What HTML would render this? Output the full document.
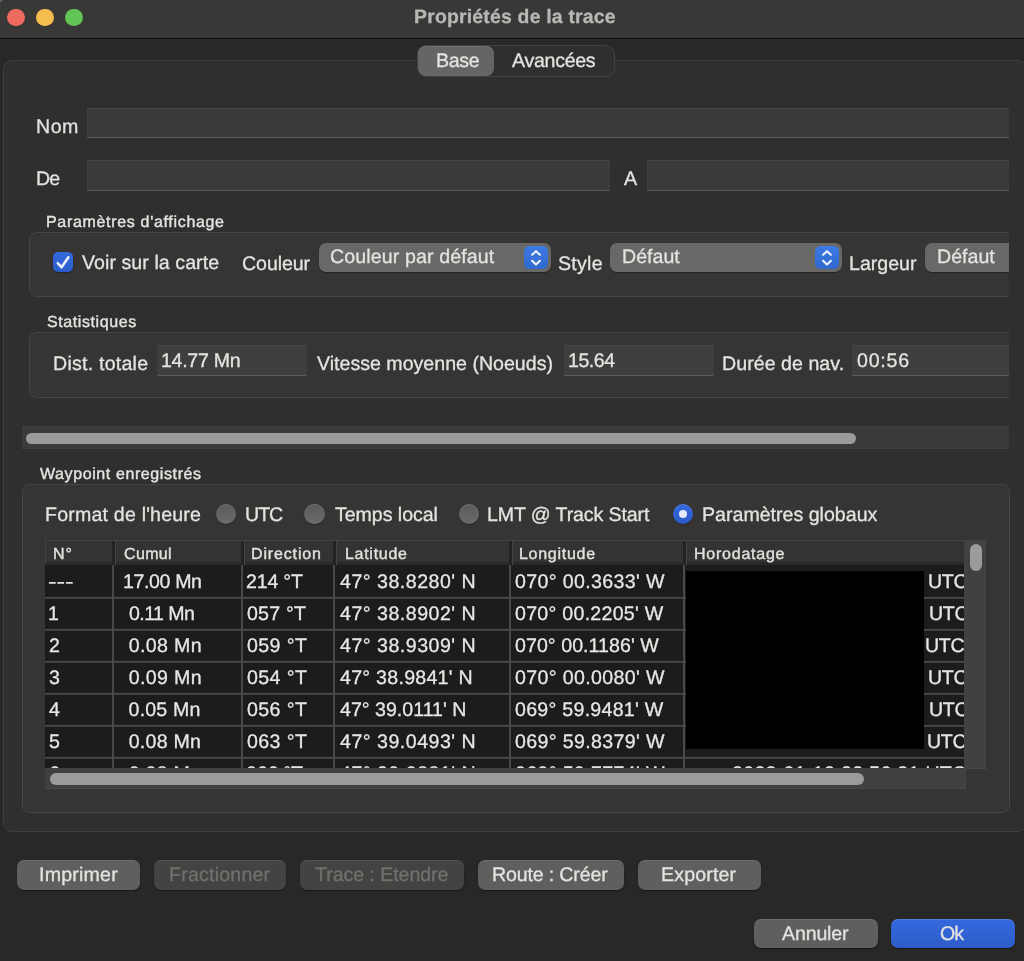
<!DOCTYPE html>
<html lang="fr">
<head>
<meta charset="utf-8">
<title>Propriétés de la trace</title>
<style>
html,body{margin:0;padding:0;}
body{width:1024px;height:961px;overflow:hidden;background:#282826;position:relative;
  font-family:"Liberation Sans","DejaVu Sans",sans-serif;font-size:19.6px;color:#e3e3e1;
  -webkit-font-smoothing:antialiased;}
*{box-sizing:border-box;}
.abs{position:absolute;}
.t{position:absolute;white-space:pre;line-height:22px;height:22px;will-change:transform;text-rendering:geometricPrecision;-webkit-text-stroke:0.3px currentColor;}
.t.s{-webkit-text-stroke:0.4px currentColor;}
.s{font-size:16px;}
/* title bar */
#titlebar{left:0;top:0;width:1024px;height:38px;background:#383836;border-bottom:0;}
#tline{left:0;top:37.5px;width:1024px;height:1.5px;background:#0b0b0a;}
.tl{position:absolute;width:17.6px;height:17.6px;border-radius:50%;top:8.8px;}
#title{font-weight:bold;font-size:19.4px;color:#b8b7b5;}
/* panel */
#panel{left:3px;top:60px;width:1024px;height:771.5px;background:#2f2f2d;border:1px solid #403f3d;border-radius:9px;}
#tabs{left:417px;top:45px;width:198px;height:32px;background:#2f2f2d;border:1px solid #41413f;border-radius:9px;}
#tabsel{left:417.6px;top:46.3px;width:76.6px;height:29.4px;background:#656563;border-radius:7.5px;box-shadow:inset 0 1px 0 rgba(255,255,255,.06);}
.field{position:absolute;background:#3b3a38;border-top:1px solid #464644;border-bottom:1px solid #5d5d5b;border-left:1px solid #403f3d;border-right:1px solid #403f3d;}
.grp{position:absolute;background:#363533;border:1px solid #474644;border-radius:7.5px;}
.pop{position:absolute;height:29px;top:243px;background:#686866;border-radius:7px;box-shadow:0 1px 1px rgba(0,0,0,.35);}
.step{position:absolute;width:24px;height:23px;top:246px;border-radius:5.5px;background:linear-gradient(#3b7be3,#3068ce);}
.btn{position:absolute;height:29.5px;border-radius:7px;background:#5f5f5d;box-shadow:0 1px 1.5px rgba(0,0,0,.45), inset 0 1px 0 rgba(255,255,255,.09);}
.btn.dis{background:#434341;}
.d{color:#70706e;}
.radio{position:absolute;width:20.6px;height:20.6px;border-radius:50%;top:503.6px;background:linear-gradient(#5b5b59,#6b6b69);box-shadow:0 0.5px 1.5px rgba(0,0,0,.45), inset 0 1px 0 rgba(255,255,255,.12);}
#clip{left:0;top:0;width:1009px;height:961px;overflow:hidden;}
#thead{background:#333331;border-left:1px solid #434341;border-top:1px solid #434341;border-bottom:3px solid #282826;height:25px !important;}
.hs{top:0;width:3px;height:24px;background:#232321;box-shadow:1px 0 0 #444442;}
.hl{left:0;width:919px;height:2px;background:linear-gradient(#4d4d4b 0,#4d4d4b 1px,#3a3a38 1px,#3a3a38 2px);}
.vl{top:0;width:2px;height:204px;background:#484846;}
.c{color:#e6e6e4;}
.h{color:#e0e0de;}
</style>
</head>
<body>
<div class="abs" id="titlebar"></div>
<div class="abs" id="tline"></div>
<svg class="abs" style="left:0;top:0;" width="6" height="6" viewBox="0 0 6 6"><path d="M-0.5 3.6 A4.6 4.6 0 0 1 3.6 -0.5" fill="none" stroke="#6e6e6c" stroke-width="1.3" opacity="0.85"/></svg>
<div class="tl" style="left:7.3px;background:#ee6a5f;"></div>
<div class="tl" style="left:36.3px;background:#f5be4f;"></div>
<div class="tl" style="left:65.4px;background:#61c455;"></div>
<div class="t" id="title" style="left:413.5px;top:6px;letter-spacing:0.21px;">Propriétés de la trace</div>

<div class="abs" id="panel"></div>
<div class="abs" id="tabs"></div>
<div class="abs" id="tabsel"></div>
<div class="t" style="left:435.6px;top:50px;letter-spacing:-0.33px;">Base</div>
<div class="t" style="left:512px;top:50px;letter-spacing:-0.29px;">Avancées</div>

<div class="abs" id="clip">
<!-- name rows -->
<div class="t" style="left:36px;top:116px;letter-spacing:0.50px;">Nom</div>
<div class="field" style="left:87px;top:108px;width:930px;height:30px;"></div>
<div class="t" style="left:36px;top:168px;letter-spacing:-1.00px;">De</div>
<div class="field" style="left:87px;top:160px;width:523px;height:31px;"></div>
<div class="t" style="left:624px;top:168px;">A</div>
<div class="field" style="left:647px;top:160px;width:370px;height:31px;"></div>

<!-- display params -->
<div class="t s" style="left:46px;top:212px;letter-spacing:0.68px;">Paramètres d'affichage</div>
<div class="grp" style="left:29px;top:232px;width:1000px;height:65px;"></div>
<div class="abs" id="chk" style="left:52.5px;top:252px;width:20.5px;height:20px;border-radius:5px;background:linear-gradient(#3568da,#2b5ccc);box-shadow:0 1px 1.5px rgba(0,0,0,.35);"></div>
<svg class="abs" style="left:52.5px;top:252px;" width="20" height="20" viewBox="0 0 20 20"><path d="M4.7 11.2 L8.6 15.3 L15.4 5.3" fill="none" stroke="#edf1fc" stroke-width="2.5" stroke-linecap="round" stroke-linejoin="round"/></svg>
<div class="t" style="left:82px;top:252px;letter-spacing:0.06px;">Voir sur la carte</div>
<div class="t" style="left:241.5px;top:253px;letter-spacing:-0.08px;">Couleur</div>
<div class="pop" style="left:319px;width:231.5px;"></div>
<div class="t" style="left:330px;top:246px;letter-spacing:0.11px;">Couleur par défaut</div>
<div class="step" style="left:524px;"><svg width="24" height="23" viewBox="0 0 24 23" style="display:block"><path d="M8.1 8.8 L12 5.2 L15.9 8.8 M8.1 14.8 L12 18.5 L15.9 14.8" fill="none" stroke="#eef3fd" stroke-width="2.1" stroke-linecap="round" stroke-linejoin="round"/></svg></div>
<div class="t" style="left:557.5px;top:253px;letter-spacing:0.25px;">Style</div>
<div class="pop" style="left:610px;width:232px;"></div>
<div class="t" style="left:622px;top:246px;">Défaut</div>
<div class="step" style="left:815px;"><svg width="24" height="23" viewBox="0 0 24 23" style="display:block"><path d="M8.1 8.8 L12 5.2 L15.9 8.8 M8.1 14.8 L12 18.5 L15.9 14.8" fill="none" stroke="#eef3fd" stroke-width="2.1" stroke-linecap="round" stroke-linejoin="round"/></svg></div>
<div class="t" style="left:849px;top:253px;">Largeur</div>
<div class="pop" style="left:925px;width:120px;"></div>
<div class="t" style="left:936.8px;top:246px;">Défaut</div>

<!-- stats -->
<div class="t s" style="left:47px;top:312px;letter-spacing:0.59px;">Statistiques</div>
<div class="grp" style="left:29px;top:332px;width:1000px;height:65.5px;"></div>
<div class="t" style="left:52.5px;top:353px;letter-spacing:0.23px;">Dist. totale</div>
<div class="field" style="left:157px;top:345px;width:150px;height:31px;background:#403f3d;"></div>
<div class="t" style="left:161px;top:350px;letter-spacing:-0.29px;">14.77 Mn</div>
<div class="t" style="left:317px;top:353px;">Vitesse moyenne (Noeuds)</div>
<div class="field" style="left:564px;top:345px;width:150px;height:31px;background:#403f3d;"></div>
<div class="t" style="left:568px;top:350px;letter-spacing:-0.50px;">15.64</div>
<div class="t" style="left:722px;top:353px;letter-spacing:0.04px;">Durée de nav.</div>
<div class="field" style="left:852px;top:345px;width:170px;height:31px;background:#403f3d;"></div>
<div class="t" style="left:857px;top:350px;letter-spacing:0.75px;">00:56</div>

<!-- hscroll -->
<div class="abs" style="left:22px;top:426px;width:990px;height:23px;background:#3a3a38;border-top:1px solid #434341;border-bottom:1px solid #40403e;"></div>
<div class="abs" style="left:26px;top:432.5px;width:830px;height:11.5px;border-radius:6px;background:#9b9b99;"></div>
</div>

<!-- waypoints -->
<div class="t s" style="left:40px;top:464px;letter-spacing:0.60px;">Waypoint enregistrés</div>
<div class="grp" id="wp" style="left:22px;top:484px;width:987.5px;height:328.5px;"></div>
<div class="t" style="left:45px;top:504px;letter-spacing:0.19px;">Format de l'heure</div>
<div class="radio" style="left:215.6px;"></div>
<div class="t" style="left:244.5px;top:504px;letter-spacing:-1.00px;">UTC</div>
<div class="radio" style="left:304.2px;"></div>
<div class="t" style="left:335px;top:504px;letter-spacing:-0.05px;">Temps local</div>
<div class="radio" style="left:458.7px;"></div>
<div class="t" style="left:487.4px;top:504px;letter-spacing:-0.12px;">LMT @ Track Start</div>
<div class="radio" style="left:672.8px;background:linear-gradient(#3569dc,#2b5bca);"></div>
<div class="abs" style="left:678.7px;top:509.5px;width:8.8px;height:8.8px;border-radius:50%;background:#e6ebfc;"></div>
<div class="t" style="left:702px;top:504px;">Paramètres globaux</div>

<div class="abs" id="table" style="left:45px;top:540px;width:941px;height:249px;background:#363533;overflow:hidden;">
<div class="abs" style="left:0;top:24px;width:919px;height:204px;background:#1c1c1b;overflow:hidden;" id="tbody">
<div class="t c" style="left:2.5px;top:7px;transform:scaleX(1.3);transform-origin:0 0;">---</div>
<div class="t c" style="left:78px;top:7px;letter-spacing:-0.39px;">17.00 Mn</div>
<div class="t c" style="left:201px;top:7px;letter-spacing:-0.20px;">214 °T</div>
<div class="t c" style="left:295px;top:7px;letter-spacing:0.49px;">47° 38.8280' N</div>
<div class="t c" style="left:470px;top:7px;letter-spacing:0.35px;">070° 00.3633' W</div>
<div class="t c" style="left:883px;top:7px;letter-spacing:-0.3px;">UTC</div>
<div class="abs hl" style="top:33px;"></div>
<div class="t c" style="left:3px;top:39px;">1</div>
<div class="t c" style="left:79.2px;top:39px;letter-spacing:-0.54px;"> 0.11 Mn</div>
<div class="t c" style="left:202.2px;top:39px;letter-spacing:0.20px;">057 °T</div>
<div class="t c" style="left:295px;top:39px;letter-spacing:0.49px;">47° 38.8902' N</div>
<div class="t c" style="left:470px;top:39px;letter-spacing:0.27px;">070° 00.2205' W</div>
<div class="t c" style="left:884px;top:39px;letter-spacing:-0.3px;">UTC</div>
<div class="abs hl" style="top:65px;"></div>
<div class="t c" style="left:4px;top:71px;">2</div>
<div class="t c" style="left:78.2px;top:71px;letter-spacing:0.33px;"> 0.08 Mn</div>
<div class="t c" style="left:202.2px;top:71px;letter-spacing:0.40px;">059 °T</div>
<div class="t c" style="left:295px;top:71px;letter-spacing:0.49px;">47° 38.9309' N</div>
<div class="t c" style="left:470px;top:71px;letter-spacing:0.05px;">070° 00.1186' W</div>
<div class="t c" style="left:879.5px;top:71px;letter-spacing:-0.3px;">UTC</div>
<div class="abs hl" style="top:97px;"></div>
<div class="t c" style="left:4px;top:103px;">3</div>
<div class="t c" style="left:78.2px;top:103px;letter-spacing:0.33px;"> 0.09 Mn</div>
<div class="t c" style="left:202.2px;top:103px;letter-spacing:0.40px;">054 °T</div>
<div class="t c" style="left:295px;top:103px;letter-spacing:0.26px;">47° 38.9841' N</div>
<div class="t c" style="left:470px;top:103px;letter-spacing:0.35px;">070° 00.0080' W</div>
<div class="t c" style="left:883px;top:103px;letter-spacing:-0.3px;">UTC</div>
<div class="abs hl" style="top:129px;"></div>
<div class="t c" style="left:4px;top:135px;">4</div>
<div class="t c" style="left:78.2px;top:135px;letter-spacing:0.17px;"> 0.05 Mn</div>
<div class="t c" style="left:202.2px;top:135px;letter-spacing:0.40px;">056 °T</div>
<div class="t c" style="left:295px;top:135px;">47° 39.0111' N</div>
<div class="t c" style="left:470px;top:135px;letter-spacing:0.27px;">069° 59.9481' W</div>
<div class="t c" style="left:883.5px;top:135px;letter-spacing:-0.3px;">UTC</div>
<div class="abs hl" style="top:161px;"></div>
<div class="t c" style="left:4px;top:167px;">5</div>
<div class="t c" style="left:77.6px;top:167px;letter-spacing:0.25px;"> 0.08 Mn</div>
<div class="t c" style="left:202.2px;top:167px;letter-spacing:0.40px;">063 °T</div>
<div class="t c" style="left:295px;top:167px;letter-spacing:0.49px;">47° 39.0493' N</div>
<div class="t c" style="left:470px;top:167px;letter-spacing:0.35px;">069° 59.8379' W</div>
<div class="t c" style="left:882px;top:167px;letter-spacing:-0.3px;">UTC</div>
<div class="abs hl" style="top:193px;"></div>
<div class="t c" style="left:4px;top:199px;">6</div>
<div class="t c" style="left:77.6px;top:199px;letter-spacing:0.25px;"> 0.08 Mn</div>
<div class="t c" style="left:201px;top:199px;letter-spacing:-0.2px;">066 °T</div>
<div class="t c" style="left:295px;top:199px;letter-spacing:0.49px;">47° 39.0881' N</div>
<div class="t c" style="left:470px;top:199px;letter-spacing:0.35px;">069° 59.7774' W</div>
<div class="t c" style="left:687px;top:199px;letter-spacing:0.3px;">2022-01-12 22:56:21 UTC</div>
<div class="abs hl" style="top:225px;"></div>
<div class="abs vl" style="left:67px;"></div>
<div class="abs vl" style="left:195.5px;"></div>
<div class="abs vl" style="left:288px;"></div>
<div class="abs vl" style="left:464px;"></div>
<div class="abs vl" style="left:638px;"></div>
</div>
<div class="abs" id="thead" style="left:0;top:0;width:919px;height:24px;">
<div class="abs hs" style="left:66px;"></div>
<div class="abs hs" style="left:194.5px;"></div>
<div class="abs hs" style="left:287px;"></div>
<div class="abs hs" style="left:463px;"></div>
<div class="abs hs" style="left:637px;"></div>
<div class="t s h" style="left:7px;top:3px;letter-spacing:0.9px;">N°</div>
<div class="t s h" style="left:78px;top:3px;letter-spacing:0.35px;">Cumul</div>
<div class="t s h" style="left:205px;top:3px;letter-spacing:0.85px;">Direction</div>
<div class="t s h" style="left:299px;top:3px;letter-spacing:0.71px;">Latitude</div>
<div class="t s h" style="left:473px;top:3px;letter-spacing:0.72px;">Longitude</div>
<div class="t s h" style="left:648px;top:3px;letter-spacing:0.76px;">Horodatage</div>
</div>
<div class="abs" style="left:640.5px;top:31px;width:238.5px;height:178px;background:#000;"></div>
<div class="abs" style="left:919px;top:0;width:22px;height:229px;background:#41413f;border-right:1px solid #474745;border-bottom:1px solid #474745;"></div>
<div class="abs" style="left:925px;top:4px;width:12px;height:27px;border-radius:6px;background:#9b9b99;"></div>
<div class="abs" style="left:0;top:228px;width:921px;height:21px;background:#40403e;border-bottom:1px solid #464644;border-right:1px solid #464644;"></div>
<div class="abs" style="left:4.5px;top:233px;width:814.5px;height:12px;border-radius:6px;background:#9b9b99;"></div>
</div>

<!-- buttons -->
<div class="btn" style="left:17px;top:860px;width:123px;"></div>
<div class="t b" style="left:38.5px;top:864px;letter-spacing:0.21px;">Imprimer</div>
<div class="btn dis" style="left:154px;top:860px;width:132px;"></div>
<div class="t b d" style="left:168.5px;top:864px;letter-spacing:0.20px;">Fractionner</div>
<div class="btn dis" style="left:299.5px;top:860px;width:164px;"></div>
<div class="t b d" style="left:315px;top:864px;letter-spacing:-0.06px;">Trace : Etendre</div>
<div class="btn" style="left:477.5px;top:860px;width:146.5px;"></div>
<div class="t b" style="left:492px;top:864px;letter-spacing:-0.16px;">Route : Créer</div>
<div class="btn" style="left:637.5px;top:860px;width:123px;"></div>
<div class="t b" style="left:661px;top:864px;letter-spacing:0.14px;">Exporter</div>
<div class="btn" style="left:754px;top:918.5px;width:123.5px;"></div>
<div class="t b" style="left:781.5px;top:922.5px;letter-spacing:-0.16px;">Annuler</div>
<div class="btn" style="left:891px;top:918.5px;width:123.5px;background:linear-gradient(#3468dd,#2d5dc9);box-shadow:0 1px 1.5px rgba(0,0,0,.45), inset 0 1px 0 rgba(255,255,255,.14);"></div>
<div class="t b" style="left:939.5px;top:922.5px;letter-spacing:-1.00px;">Ok</div>
</body>
</html>
